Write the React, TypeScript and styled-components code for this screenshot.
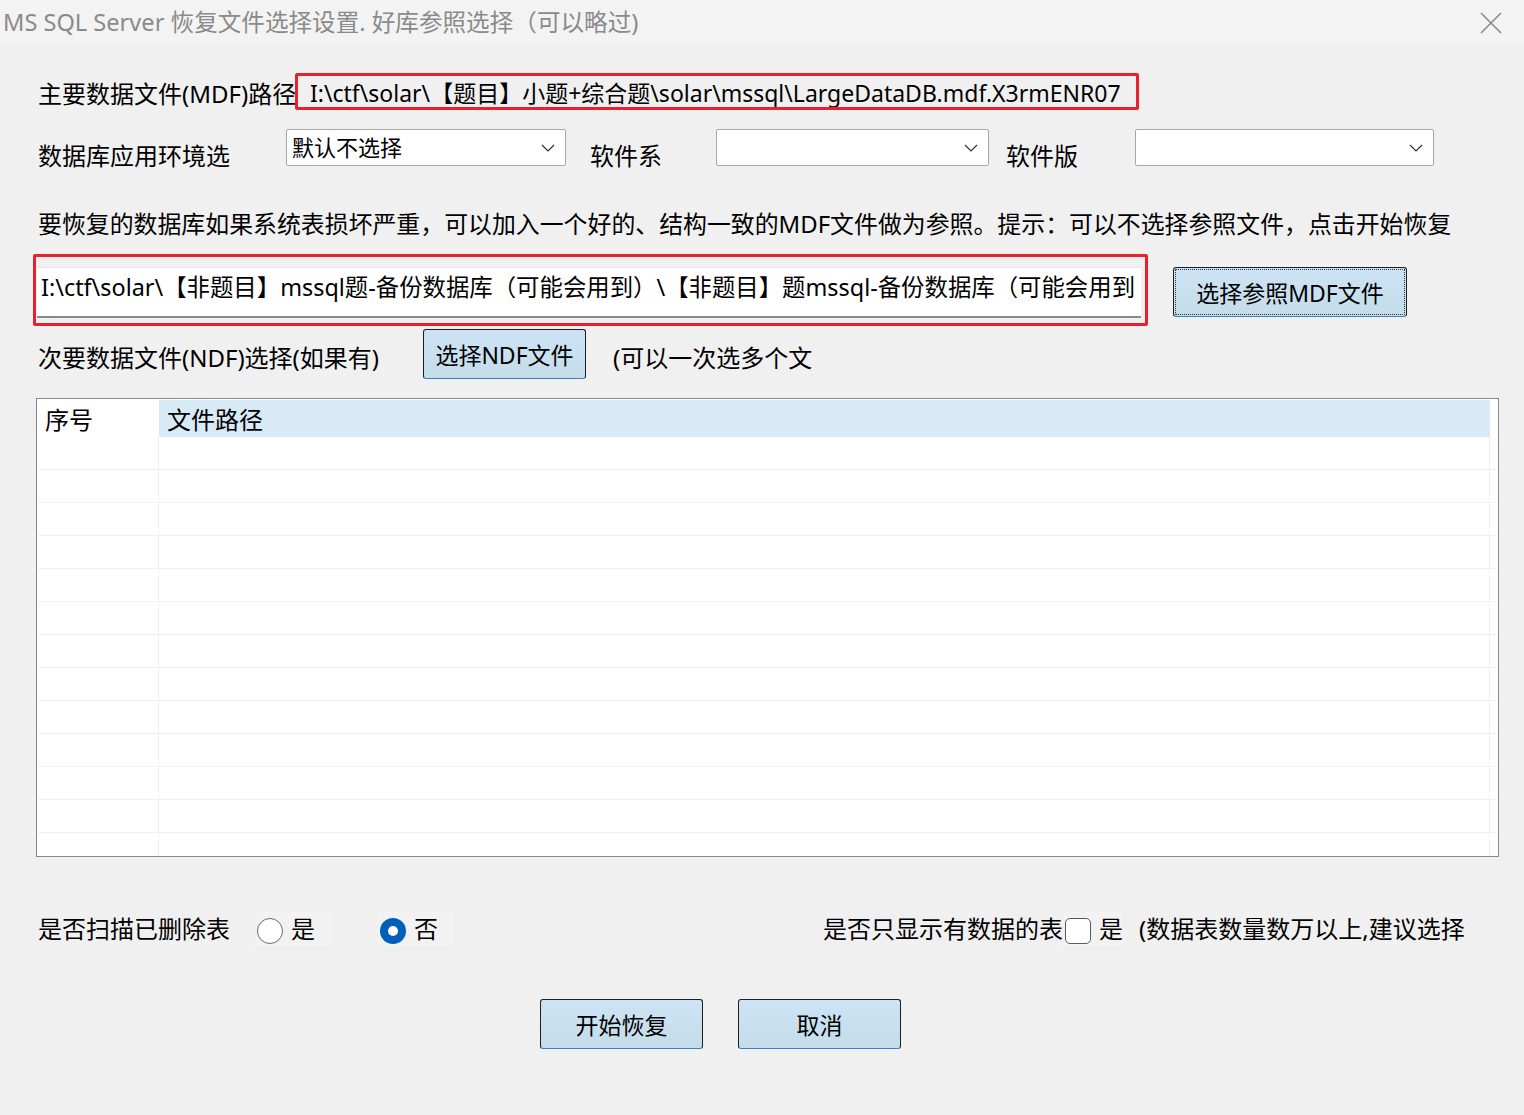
import React from "react";
import styled, { createGlobalStyle } from "styled-components";

const Global = createGlobalStyle`
  html, body { margin: 0; padding: 0; background: #f0f0f0; }
  body { font-family: "Noto Sans", "Noto Sans CJK SC", sans-serif; color: #000; }
  * { box-sizing: border-box; }
`;

const FONT = `"Noto Sans", "Noto Sans CJK SC", sans-serif`;
const RED = "#e8212d";

const Window = styled.div`
  width: 1524px;
  height: 1115px;
  background: #f0f0f0;
  display: flex;
  flex-direction: column;
  overflow: hidden;
  font-family: ${FONT};
`;

const TitleBar = styled.div`
  height: 45px;
  flex: none;
  display: flex;
  align-items: center;
  justify-content: space-between;
  padding: 0 22px 0 3px;
  background: #f3f3f3;
`;

const TitleText = styled.div`
  font-size: 23.6px;
  color: #8a8a8a;
  line-height: 1;
  white-space: nowrap;
`;

const Row = styled.div<{ $top: number; $h: number; $left?: number; $align?: string }>`
  margin-top: ${(p) => p.$top}px;
  height: ${(p) => p.$h}px;
  padding-left: ${(p) => p.$left ?? 38}px;
  display: flex;
  align-items: ${(p) => p.$align ?? "center"};
  flex: none;
`;

const Label = styled.span<{ $size?: number; $w?: number; $ml?: number; $dy?: number }>`
  font-size: ${(p) => p.$size ?? 24}px;
  line-height: 1;
  white-space: nowrap;
  color: #000;
  ${(p) => (p.$w ? `width: ${p.$w}px; flex: none;` : "")}
  margin-left: ${(p) => p.$ml ?? 0}px;
  position: relative;
  top: ${(p) => p.$dy ?? 0}px;
`;

const RedPathBox = styled.div`
  width: 844px;
  height: 37px;
  border: 3px solid ${RED};
  border-radius: 2px;
  display: flex;
  align-items: center;
  padding-left: 12px;
  font-size: 23px;
  white-space: nowrap;
  overflow: hidden;
  background: #f0f0f0;
  flex: none;
  position: relative;
`;

const Combo = styled.div<{ $w: number; $ml: number }>`
  width: ${(p) => p.$w}px;
  height: 37px;
  margin-left: ${(p) => p.$ml}px;
  background: #fff;
  border: 1px solid #a8a8a8;
  border-radius: 2px;
  display: flex;
  align-items: center;
  justify-content: space-between;
  padding: 0 10px 4px 5px;
  font-size: 22px;
  flex: none;
`;

const Chevron = () => (
  <svg width="14" height="8" viewBox="0 0 14 8" style={{ marginTop: 4 }}>
    <polyline points="1,1 7,7 13,1" fill="none" stroke="#333" strokeWidth="1.2" />
  </svg>
);

const Hint = styled.div`
  font-size: 23.9px;
  line-height: 1;
  white-space: nowrap;
`;

const RefBox = styled.div`
  width: 1115px;
  height: 72px;
  border: 3px solid ${RED};
  border-radius: 2px;
  padding: 10px 4px 0 1px;
  flex: none;
`;

const RefInput = styled.div`
  height: 51px;
  background: #fff;
  border-top: 1px solid #e6e6e6;
  border-bottom: 2px solid #8a8a8a;
  padding: 5px 0 0 4px;
  font-size: 23.4px;
  line-height: 28px;
  white-space: nowrap;
  overflow: hidden;
`;

const Button = styled.button<{ $w: number; $ml: number; $focus?: boolean }>`
  width: ${(p) => p.$w}px;
  height: 50px;
  margin-left: ${(p) => p.$ml}px;
  flex: none;
  font-family: ${FONT};
  font-size: 23px;
  color: #000;
  background: linear-gradient(#cde3f5, #c4dde9);
  border: 1px solid #1e1e1e;
  border-bottom-color: #3b7fd0;
  border-radius: 3px;
  padding: 0;
  position: relative;
  display: flex;
  align-items: center;
  justify-content: center;
  ${(p) =>
    p.$focus
      ? `outline: 1px dotted #333; outline-offset: -3px;`
      : ""}
`;

const Table = styled.div`
  margin-left: 36px;
  width: 1463px;
  height: 459px;
  margin-top: 19px;
  border: 1px solid #828790;
  background: #fff;
  padding: 1px 1px 0 1px;
  overflow: hidden;
  flex: none;
`;

const GridRow = styled.div<{ $header?: boolean }>`
  display: grid;
  grid-template-columns: 121px 1331px 1fr;
  height: ${(p) => (p.$header ? 37 : 33)}px;
  border-bottom: ${(p) => (p.$header ? "none" : "1px solid #f0f0f0")};
`;

const Cell = styled.div<{ $bg?: string; $line?: boolean; $pl?: number }>`
  background: ${(p) => p.$bg ?? "#fff"};
  border-right: ${(p) => (p.$line ? "1px solid #f0f0f0" : "none")};
  font-size: 24px;
  line-height: 1;
  display: flex;
  align-items: center;
  padding-left: ${(p) => p.$pl ?? 7}px;
  padding-top: 2px;
  white-space: nowrap;
`;

const OptGroup = styled.div<{ $ml: number; $w?: number }>`
  margin-left: ${(p) => p.$ml}px;
  display: flex;
  align-items: center;
  gap: 8px;
  height: 37px;
  padding-left: 2px;
  ${(p) => (p.$w ? `width: ${p.$w}px;` : "")}
  background: #f2f2f2;
  flex: none;
`;

const Radio = styled.span<{ $on?: boolean }>`
  width: 26px;
  height: 26px;
  border-radius: 50%;
  flex: none;
  position: relative;
  top: 2px;
  ${(p) =>
    p.$on
      ? `background: #005fb8; border: none;`
      : `background: #fff; border: 1.5px solid #6b6b6b;`}
  &::after {
    content: "";
    display: ${(p) => (p.$on ? "block" : "none")};
    position: absolute;
    left: 8px;
    top: 8px;
    width: 10px;
    height: 10px;
    border-radius: 50%;
    background: #fff;
  }
`;

const Check = styled.span`
  width: 26px;
  height: 26px;
  border: 1.5px solid #5a5a5a;
  border-radius: 5px;
  background: #fff;
  flex: none;
  position: relative;
  top: 2px;
`;

const CloseIcon = () => (
  <svg width="22" height="22" viewBox="0 0 22 22">
    <line x1="1" y1="1" x2="21" y2="21" stroke="#8a8a8a" strokeWidth="1.6" />
    <line x1="21" y1="1" x2="1" y2="21" stroke="#8a8a8a" strokeWidth="1.6" />
  </svg>
);

export default function App() {
  const rows = Array.from({ length: 13 });
  return (
    <>
      <Global />
      <Window>
        <TitleBar>
          <TitleText>MS SQL Server 恢复文件选择设置. 好库参照选择（可以略过)</TitleText>
          <CloseIcon />
        </TitleBar>

        <Row $top={28} $h={37}>
          <Label $w={257} $dy={2}>主要数据文件(MDF)路径:</Label>
          <RedPathBox>I:\ctf\solar\【题目】小题+综合题\solar\mssql\LargeDataDB.mdf.X3rmENR07</RedPathBox>
        </Row>

        <Row $top={19} $h={37}>
          <Label $w={248} $dy={8}>数据库应用环境选</Label>
          <Combo $w={280} $ml={0}>
            <span>默认不选择</span>
            <Chevron />
          </Combo>
          <Label $ml={24} $dy={8}>软件系</Label>
          <Combo $w={273} $ml={54}>
            <span />
            <Chevron />
          </Combo>
          <Label $ml={17} $dy={8}>软件版</Label>
          <Combo $w={299} $ml={57}>
            <span />
            <Chevron />
          </Combo>
        </Row>

        <Row $top={43} $h={30}>
          <Hint>要恢复的数据库如果系统表损坏严重，可以加入一个好的、结构一致的MDF文件做为参照。提示：可以不选择参照文件，点击开始恢复</Hint>
        </Row>

        <Row $top={15} $h={72} $left={33} $align="flex-start">
          <RefBox>
            <RefInput>I:\ctf\solar\【非题目】mssql题-备份数据库（可能会用到）\【非题目】题mssql-备份数据库（可能会用到</RefInput>
          </RefBox>
          <div style={{ marginTop: 13 }}>
            <Button $w={234} $ml={25} $focus>选择参照MDF文件</Button>
          </div>
        </Row>

        <Row $top={3} $h={50}>
          <Label $w={385} $dy={4}>次要数据文件(NDF)选择(如果有)</Label>
          <Button $w={163} $ml={0}>选择NDF文件</Button>
          <Label $ml={27} $dy={4}>(可以一次选多个文</Label>
        </Row>

        <Table>
          <GridRow $header>
            <Cell>序号</Cell>
            <Cell $bg="#d9eaf7" $pl={8}>文件路径</Cell>
            <Cell />
          </GridRow>
          {rows.map((_, i) => (
            <GridRow key={i}>
              <Cell $line />
              <Cell $line />
              <Cell />
            </GridRow>
          ))}
        </Table>

        <Row $top={53} $h={37}>
          <Label $w={217}>是否扫描已删除表</Label>
          <OptGroup $ml={0} $w={77}>
            <Radio />
            <Label>是</Label>
          </OptGroup>
          <OptGroup $ml={46} $w={75}>
            <Radio $on />
            <Label>否</Label>
          </OptGroup>
          <Label $ml={370}>是否只显示有数据的表</Label>
          <OptGroup $ml={0}>
            <Check />
            <Label>是</Label>
          </OptGroup>
          <Label $ml={16}>(数据表数量数万以上,建议选择</Label>
        </Row>

        <Row $top={52} $h={50} $left={540}>
          <Button $w={163} $ml={0}>开始恢复</Button>
          <Button $w={163} $ml={35}>取消</Button>
        </Row>
      </Window>
    </>
  );
}
